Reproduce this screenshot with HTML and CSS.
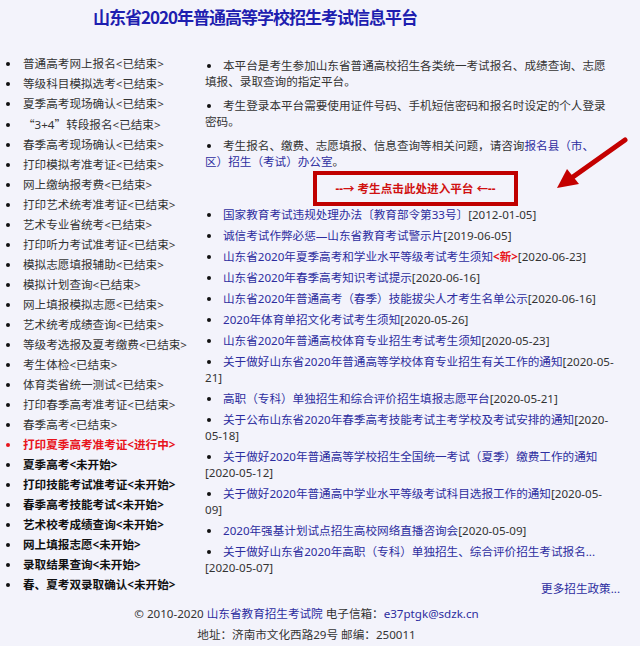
FILE: index.html
```html
<!DOCTYPE html>
<html lang="zh-CN">
<head>
<meta charset="utf-8">
<title>山东省2020年普通高等学校招生考试信息平台</title>
<link rel="stylesheet" href="styles.css">
</head>
<body>
<div class="page">
  <header class="header">
    <h1 class="title">山东省2020年普通高等学校招生考试信息平台</h1>
  </header>
  <main class="main">
    <ul class="menu">
      <li class="done">普通高考网上报名&lt;已结束&gt;</li>
      <li class="done">等级科目模拟选考&lt;已结束&gt;</li>
      <li class="done">夏季高考现场确认&lt;已结束&gt;</li>
      <li class="done"><span class="cjk">“</span>3+4<span class="cjk">”</span>转段报名&lt;已结束&gt;</li>
      <li class="done">春季高考现场确认&lt;已结束&gt;</li>
      <li class="done">打印模拟考准考证&lt;已结束&gt;</li>
      <li class="done">网上缴纳报考费&lt;已结束&gt;</li>
      <li class="done">打印艺术统考准考证&lt;已结束&gt;</li>
      <li class="done">艺术专业省统考&lt;已结束&gt;</li>
      <li class="done">打印听力考试准考证&lt;已结束&gt;</li>
      <li class="done">模拟志愿填报辅助&lt;已结束&gt;</li>
      <li class="done">模拟计划查询&lt;已结束&gt;</li>
      <li class="done">网上填报模拟志愿&lt;已结束&gt;</li>
      <li class="done">艺术统考成绩查询&lt;已结束&gt;</li>
      <li class="done">等级考选报及夏考缴费&lt;已结束&gt;</li>
      <li class="done">考生体检&lt;已结束&gt;</li>
      <li class="done">体育类省统一测试&lt;已结束&gt;</li>
      <li class="done">打印春季高考准考证&lt;已结束&gt;</li>
      <li class="done">春季高考&lt;已结束&gt;</li>
      <li class="active">打印夏季高考准考证&lt;进行中&gt;</li>
      <li class="todo">夏季高考&lt;未开始&gt;</li>
      <li class="todo">打印技能考试准考证&lt;未开始&gt;</li>
      <li class="todo">春季高考技能考试&lt;未开始&gt;</li>
      <li class="todo">艺术校考成绩查询&lt;未开始&gt;</li>
      <li class="todo">网上填报志愿&lt;未开始&gt;</li>
      <li class="todo">录取结果查询&lt;未开始&gt;</li>
      <li class="todo">春、夏考双录取确认&lt;未开始&gt;</li>
    </ul>
    <section class="content">
      <p class="note">本平台是考生参加山东省普通高校招生各类统一考试报名、成绩查询、志愿填报、录取查询的指定平台。</p>
      <p class="note">考生登录本平台需要使用证件号码、手机短信密码和报名时设定的个人登录密码。</p>
      <p class="note last">考生报名、缴费、志愿填报、信息查询等相关问题，请咨询<a class="link" href="#">报名县（市、区）招生（考试）办公室</a>。</p>
      <a class="enter" href="#">--→ 考生点击此处进入平台 ←--</a>
      <ul class="news">
        <li><a class="link" href="#">国家教育考试违规处理办法〔教育部令第33号〕</a>[2012-01-05]</li>
        <li><a class="link" href="#">诚信考试作弊必惩—山东省教育考试警示片</a>[2019-06-05]</li>
        <li><a class="link" href="#">山东省2020年夏季高考和学业水平等级考试考生须知</a><span class="new">&lt;新&gt;</span>[2020-06-23]</li>
        <li><a class="link" href="#">山东省2020年春季高考知识考试提示</a>[2020-06-16]</li>
        <li><a class="link" href="#">山东省2020年普通高考（春季）技能拔尖人才考生名单公示</a>[2020-06-16]</li>
        <li><a class="link" href="#">2020年体育单招文化考试考生须知</a>[2020-05-26]</li>
        <li><a class="link" href="#">山东省2020年普通高校体育专业招生考试考生须知</a>[2020-05-23]</li>
        <li><a class="link" href="#">关于做好山东省2020年普通高等学校体育专业招生有关工作的通知</a>[2020-05-21]</li>
        <li><a class="link" href="#">高职（专科）单独招生和综合评价招生填报志愿平台</a>[2020-05-21]</li>
        <li><a class="link" href="#">关于公布山东省2020年春季高考技能考试主考学校及考试安排的通知</a>[2020-05-18]</li>
        <li><a class="link" href="#">关于做好2020年普通高等学校招生全国统一考试（夏季）缴费工作的通知</a>[2020-05-12]</li>
        <li><a class="link" href="#">关于做好2020年普通高中学业水平等级考试科目选报工作的通知</a>[2020-05-09]</li>
        <li><a class="link" href="#">2020年强基计划试点招生高校网络直播咨询会</a>[2020-05-09]</li>
        <li><a class="link" href="#">关于做好山东省2020年高职（专科）单独招生、综合评价招生考试报名...</a>[2020-05-07]</li>
      </ul>
      <div class="more"><a class="link" href="#">更多招生政策...</a></div>
    </section>
  </main>
  <footer class="footer">
    <div>© 2010-2020 <a class="link" href="#">山东省教育招生考试院</a> 电子信箱：<a class="link" href="#">e37ptgk@sdzk.cn</a></div>
    <div>地址：济南市文化西路29号 邮编：250011</div>
  </footer>
</div>
<svg class="arrow" width="90" height="70" viewBox="550 130 90 70" aria-hidden="true">
  <line x1="625" y1="140" x2="570" y2="179" stroke="#c40000" stroke-width="5" stroke-linecap="round"/>
  <polygon points="557,188 567,169 579,184" fill="#c40000"/>
</svg>
</body>
</html>
```
FILE: styles.css
```css
html, body {
  margin: 0;
  padding: 0;
}
body {
  background: #f3f3fb;
  font-family: "Noto Sans", "Noto Sans CJK SC", sans-serif;
  font-size: 11.6px;
  color: #333;
  position: relative;
  width: 640px;
  height: 646px;
  overflow: hidden;
  text-spacing-trim: space-all;
}
a {
  text-decoration: none;
}
.cjk {
  font-family: "Noto Sans CJK SC", sans-serif;
}
.page {
  width: 617px;
}
.header {
  height: 50px;
  box-sizing: border-box;
  padding: 5px 0 0 93px;
}
.title {
  margin: 0;
  font-family: "Noto Sans CJK SC", sans-serif;
  font-size: 17px;
  line-height: 24px;
  letter-spacing: -1px;
  font-weight: bold;
  color: #1e1eb0;
  white-space: nowrap;
}
.main {
  display: flex;
}
.menu {
  list-style: none;
  margin: 0;
  padding: 4px 0 0 0;
  width: 205px;
  flex: none;
}
.menu li {
  line-height: 20px;
  white-space: nowrap;
}
.menu li::before,
.note::before,
.news li::before {
  content: "";
  display: inline-block;
  width: 4px;
  height: 4px;
  border-radius: 50%;
  background: #111;
  vertical-align: middle;
  margin: -2px 13px 0 6px;
}
.menu .done {
  color: #333;
}
.menu .active {
  color: #e8141c;
  font-weight: bold;
}
.menu .active::before {
  background: #e8141c;
}
.menu .todo {
  color: #111;
  font-weight: bold;
}
.content {
  width: 412px;
  flex: none;
  padding-top: 7.75px;
}
.note {
  margin: 0 0 7px 0;
  line-height: 16.5px;
}
.note.last {
  margin-bottom: 0;
}
.note::before,
.news li::before {
  margin: -2px 12px 0 2px;
}
.link {
  color: #2d2d9f;
}
.enter {
  display: block;
  box-sizing: border-box;
  width: 205px;
  height: 35px;
  margin: 0 0 0 108px;
  border: 4px solid #c00000;
  color: #d01010;
  font-weight: bold;
  text-align: center;
  line-height: 27px;
}
.news {
  list-style: none;
  margin: 1px 0 0 0;
  padding: 0;
}
.news li {
  line-height: 16px;
  margin-bottom: 5px;
}
.new {
  color: #e8141c;
  font-weight: bold;
}
.more {
  text-align: right;
  margin-right: -3px;
  line-height: 16px;
}
.footer {
  width: 613px;
  text-align: center;
  line-height: 21px;
  padding-top: 6px;
  color: #333;
}
.arrow {
  position: absolute;
  left: 550px;
  top: 130px;
}
```
